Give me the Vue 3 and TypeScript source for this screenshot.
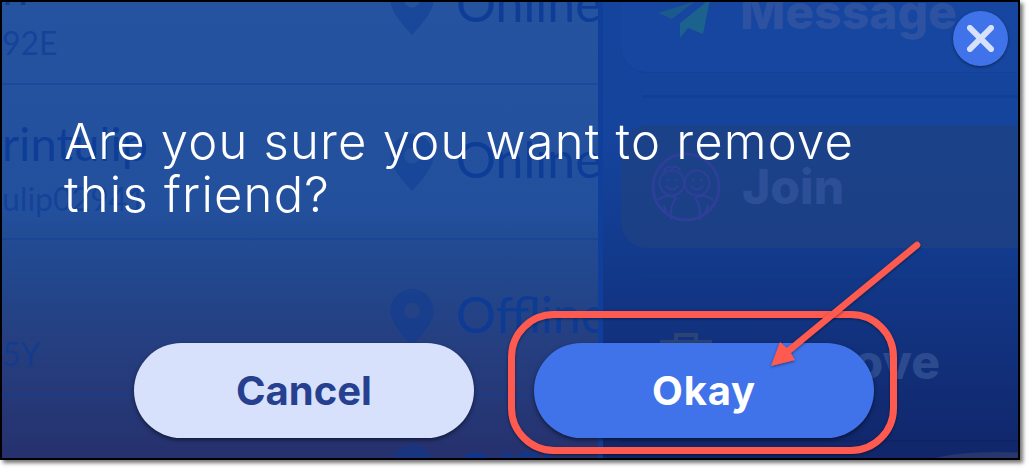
<script setup lang="ts">
interface Row { name: string; code: string; status: string }
const rows: Row[] = [
  { name: 'n', code: '92E', status: 'Online' },
  { name: 'rintulip', code: 'ulip02941', status: 'Online' },
  { name: '', code: '5Y', status: 'Offline' },
  { name: '', code: '', status: 'Offline' },
]
</script>

<template>
  <div class="page">
    <div class="frame">
      <div class="screen" aria-hidden="true">
        <div class="list">
          <div v-for="(row, i) in rows" :key="i" class="row">
            <div class="who">
              <div class="name">{{ row.name }}</div>
              <div class="code">{{ row.code }}</div>
            </div>
            <svg class="pin" viewBox="0 0 44 58">
              <path fill-rule="evenodd" d="M22 0C10 0 0 10 0 22c0 13 14 27 22 36 8-9 22-23 22-36C44 10 34 0 22 0zm0 14a8 8 0 1 1 0 16 8 8 0 0 1 0-16z" />
            </svg>
            <span class="status">{{ row.status }}</span>
          </div>
        </div>
        <div class="actions">
          <div class="card card-message">
            <svg class="plane" viewBox="0 0 52 40">
              <path d="M44 0 0 14l14 6L40 0z" fill="#1b5a8c" />
              <path d="M52 0 22 24v15l8-10 15 6 7-35z" fill="#1b628e" />
            </svg>
            <span>Message</span>
          </div>
          <div class="rule"></div>
          <div class="card card-join">
            <svg class="faces" viewBox="0 0 70 70" fill="none" stroke="#2d3f98" stroke-width="2.2" stroke-linecap="round">
              <circle cx="35" cy="35" r="33" stroke-width="3" />
              <circle cx="21" cy="31" r="12.5" />
              <circle cx="46" cy="31" r="12.5" />
              <path d="M13 19q3-6 8-3 5-3 8 2M15 34q6 7 12 0M40 34q6 7 12 0" />
              <path d="M17 28h.1M25 28h.1M42 28h.1M50 28h.1" stroke-width="3" />
              <path d="M7 48q9-7 18-2-6 7-5 21M62 48q-9-7-18-2 6 7 5 21M13 54l3 8M57 54l-3 8" />
            </svg>
            <span>Join</span>
          </div>
          <div class="rule rule-b"></div>
          <div class="card card-remove">
            <svg class="trash" viewBox="0 0 52 30">
              <path d="M16 7V2h20v5" fill="none" stroke="#2c4377" stroke-width="4" />
              <path d="M0 7h52v23H0z" fill="#2c4377" />
            </svg>
            <span>Remove</span>
          </div>
          <div class="rule rule-c"></div>
          <div class="rule rule-d"></div>
          <div class="card-next"></div>
        </div>
      </div>

      <div class="dialog">
        <p class="question">Are you sure you want to remove<br />this friend?</p>
        <div class="buttons">
          <button class="btn btn-cancel" type="button">Cancel</button>
          <button class="btn btn-okay" type="button">Okay</button>
        </div>
      </div>

      <button class="close" type="button" aria-label="Close">
        <svg viewBox="0 0 28 28"><path d="M3 3l22 22M25 3 3 25" /></svg>
      </button>

      <div class="highlight"></div>
      <svg class="arrow" viewBox="0 0 1030 470">
        <defs>
          <filter id="arrowShadow" x="-20%" y="-20%" width="140%" height="140%">
            <feDropShadow dx="0" dy="1" stdDeviation="1.5" flood-color="#000" flood-opacity="0.5" />
          </filter>
        </defs>
        <g filter="url(#arrowShadow)">
          <path d="M917 245 787 352" stroke="#ff5a4f" stroke-width="6.5" stroke-linecap="round" fill="none" />
          <path d="M771 366 780 342 789 350 795 360z" fill="#ff5a4f" />
        </g>
      </svg>
    </div>
  </div>
</template>

<style>
html, body { margin: 0; background: #fff; }
</style>

<style scoped>
.page {
  width: 1030px;
  height: 470px;
  background: #fff;
  overflow: hidden;
}
.frame {
  position: relative;
  width: 1016px;
  height: 456px;
  border: 2px solid #000;
  box-shadow: 3px 3px 4px rgba(0, 0, 0, 0.55);
  font-family: Inter, "Liberation Sans", sans-serif;
}
.screen {
  height: 100%;
  display: flex;
  overflow: hidden;
  background: linear-gradient(180deg, #15449d 0%, #15449d 30%, #123a8c 55%, #11266a 100%);
}
.list {
  width: 596px;
  flex: none;
  background: linear-gradient(180deg, #25539f 0%, #23509d 45%, #214b94 52%, #253f80 75%, #26316e 100%);
  overflow: hidden;
}
.row {
  height: 155.5px;
  box-sizing: border-box;
  display: flex;
  align-items: flex-start;
  padding-top: 49px;
  border-bottom: 2px solid rgba(18, 62, 150, 0.45);
  font-family: Lato, sans-serif;
  color: rgba(10, 58, 150, 0.85);
}
.row:first-child { margin-top: -73px; }
.who { width: 388px; flex: none; margin-top: -16px; }
.name { height: 50px; font-size: 47px; line-height: 50px; }
.code { margin-top: 12px; height: 38px; font-size: 32px; line-height: 38px; color: rgba(10, 58, 150, 0.6); }
.pin { width: 44px; height: 57px; fill: rgba(10, 58, 150, 0.42); flex: none; margin-right: 22px; }
.status { font-size: 50px; line-height: 50px; white-space: nowrap; }
.actions {
  flex: 1;
  min-width: 0;
  padding-left: 18px;
  border-left: 5px solid #0f3f9a;
  display: flex;
  flex-direction: column;
  overflow: hidden;
}
.card {
  flex: none;
  height: 122px;
  border-radius: 26px;
  display: flex;
  align-items: center;
  font-size: 48px;
  font-weight: 800;
  margin-right: -20px;
  white-space: nowrap;
}
.card-message {
  margin-top: -52px;
  padding-left: 37px;
  gap: 30px;
  background: #16469f;
  box-shadow: 0 1px 0 #13409a;
  color: #2d52a1;
}
.rule {
  flex: none;
  height: 3px;
  margin: 23px 0 27px 21px;
  background: #123e94;
}
.rule-b { margin: 30px 0 0 21px; background: #113684; }
.rule-c { margin: 0 0 0 21px; height: 2px; background: #102a72; }
.rule-d { margin: 16px 0 0 0; height: 2px; background: #0f2466; }
.card-join {
  height: 123px;
  padding-left: 30px;
  gap: 21px;
  background: linear-gradient(180deg, #1b4289 0%, #1c3f85 100%);
  color: #2d4f98;
}
.card-remove {
  margin-top: 19px;
  padding-left: 39px;
  gap: 37px;
  color: #2c4a8e;
}
.card-next {
  flex: none;
  height: 14px;
  margin: 10px -60px 0 300px;
  border-radius: 50% 50% 0 0 / 100% 100% 0 0;
  background: #27366c;
}
.plane { width: 52px; height: 40px; flex: none; margin-top: 16px; }
.faces { width: 70px; height: 70px; flex: none; }
.trash { width: 52px; height: 30px; flex: none; margin-top: -27px; }

.dialog {
  position: absolute;
  inset: 0;
  display: flex;
  flex-direction: column;
  justify-content: space-between;
  padding: 113px 0 20px 62px;
  box-sizing: border-box;
}
.question {
  margin: 0;
  color: #fff;
  font-size: 49px;
  line-height: 53px;
  font-weight: 300;
  letter-spacing: 1.2px;
}
.buttons {
  display: flex;
  gap: 60px;
  padding-left: 70px;
}
.btn {
  width: 340px;
  height: 95px;
  border: 0;
  border-radius: 48px;
  font-family: inherit;
  font-size: 40px;
  font-weight: 700;
  box-shadow: 0 2px 4px rgba(0, 0, 0, 0.5);
}
.btn-cancel { background: #d7e1fb; color: #26408f; }
.btn-okay { background: #4073ea; color: #fff; letter-spacing: 0.8px; }

.close {
  position: absolute;
  top: 9px;
  right: 10px;
  width: 55px;
  height: 55px;
  padding: 14px;
  border: 0;
  border-radius: 50%;
  background: #4073ea;
  box-shadow: 0 1px 3px rgba(0, 0, 0, 0.45);
}
.close svg { display: block; width: 100%; height: 100%; }
.close path { fill: none; stroke: #d7e1fb; stroke-width: 6; stroke-linecap: round; }

.highlight {
  position: absolute;
  left: 506px;
  top: 309px;
  width: 389px;
  height: 143px;
  box-sizing: border-box;
  border: 7px solid #ff5a4f;
  border-radius: 46px;
  box-shadow: 0 1px 3px rgba(0, 0, 0, 0.5), inset 0 1px 3px rgba(0, 0, 0, 0.4);
}
.arrow {
  position: absolute;
  left: -2px;
  top: -2px;
  width: 1030px;
  height: 470px;
  pointer-events: none;
}
</style>
